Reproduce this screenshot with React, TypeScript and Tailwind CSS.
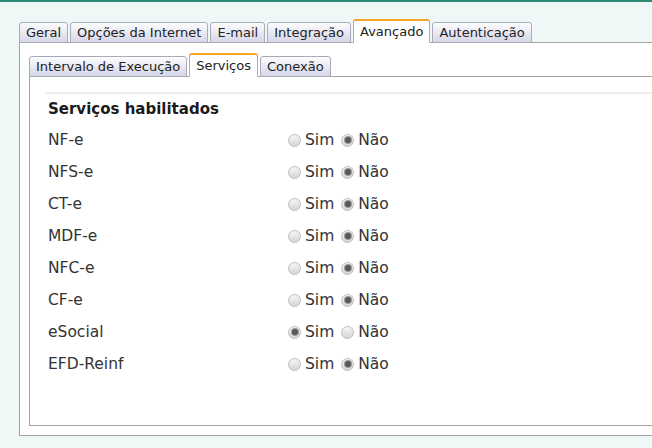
import React from 'react'

const font = { fontFamily: '"DejaVu Sans", Verdana, sans-serif' }

const outerTabs = ['Geral', 'Opções da Internet', 'E-mail', 'Integração', 'Avançado', 'Autenticação']
const innerTabs = ['Intervalo de Execução', 'Serviços', 'Conexão']

const services: { name: string; enabled: boolean }[] = [
    { name: 'NF-e', enabled: false },
    { name: 'NFS-e', enabled: false },
    { name: 'CT-e', enabled: false },
    { name: 'MDF-e', enabled: false },
    { name: 'NFC-e', enabled: false },
    { name: 'CF-e', enabled: false },
    { name: 'eSocial', enabled: true },
    { name: 'EFD-Reinf', enabled: false },
]

function Tab({ label, active }: { label: string; active?: boolean }) {
    if (active) {
        return (
            <div className="flex items-center h-[24px] px-[6px] rounded-t-[3px] border border-[#a9abb9] border-t-2 border-t-[#f4a62a] border-b-white bg-white text-[13px] text-[#222]">
                {label}
            </div>
        )
    }
    return (
        <div className="flex items-center h-[21px] px-[6px] rounded-t-[3px] border border-[#a9abb9] bg-gradient-to-b from-[#fdfdfe] to-[#d5d6e8] text-[13px] text-[#222]">
            {label}
        </div>
    )
}

function Radio({ checked }: { checked?: boolean }) {
    return (
        <span className="flex items-center justify-center w-[13px] h-[13px] -translate-y-[1px] rounded-full border border-[#bcbcbc] bg-gradient-to-b from-[#f6f6f6] to-[#d6d6d6]">
            {checked && <span className="w-[6px] h-[6px] rounded-full bg-[#5a5a5a] ring-1 ring-[#9a9a9a]" />}
        </span>
    )
}

export default function App() {
    return (
        <div className="w-[652px] h-[448px] overflow-hidden bg-[#eff8f7] border-t-2 border-[#2b8a73] pt-[17px]" style={font}>
            <div className="ml-[19px] w-[700px]">
                {/* Outer tabs */}
                <div className="flex items-end gap-[2px] relative z-10 -mb-px">
                    {outerTabs.map((t) => (
                        <Tab key={t} label={t} active={t === 'Avançado'} />
                    ))}
                </div>
                <div className="border border-[#a3a3a3] bg-white h-[394px] pl-[9px] pt-[10px]">
                    {/* Inner tabs */}
                    <div className="flex items-end gap-[2px] relative z-10 -mb-px">
                        {innerTabs.map((t) => (
                            <Tab key={t} label={t} active={t === 'Serviços'} />
                        ))}
                    </div>
                    <div className="border border-[#a3a3a3] bg-white h-[350px] pl-[15px] pt-[15px]">
                        <div className="h-[2px] bg-[#eeeeee]" />
                        <div className="pl-[3px] pt-[4px]">
                            <div className="text-[15px] font-bold text-[#1b1b1b] h-[22px] flex items-center">Serviços habilitados</div>
                            <div className="flex flex-col mt-[5px]">
                                {services.map((s) => (
                                    <div key={s.name} className="flex items-center h-[32px] text-[15.5px] text-[#333]">
                                        <div className="w-[240px]">{s.name}</div>
                                        <div className="flex items-center">
                                            <Radio checked={s.enabled} />
                                            <span className="ml-[4px] mr-[7px]">Sim</span>
                                            <Radio checked={!s.enabled} />
                                            <span className="ml-[4px]">Não</span>
                                        </div>
                                    </div>
                                ))}
                            </div>
                        </div>
                    </div>
                </div>
            </div>
        </div>
    )
}
